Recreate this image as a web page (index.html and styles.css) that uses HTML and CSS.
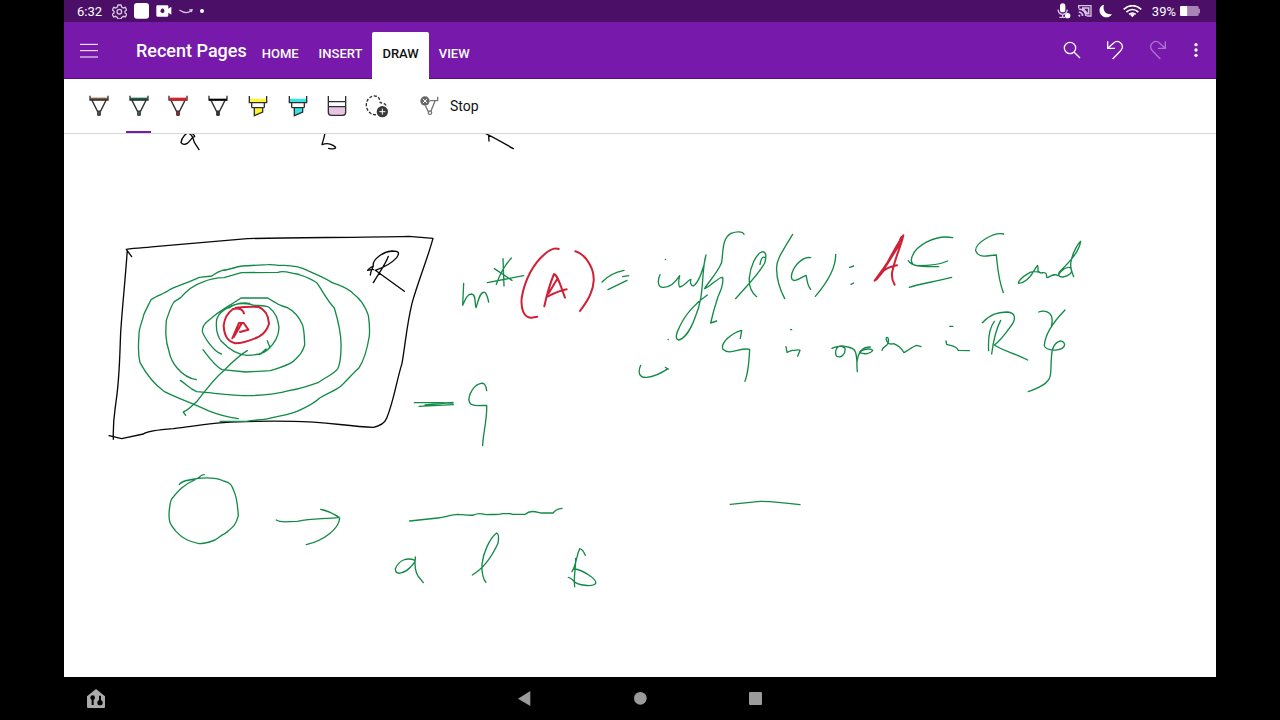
FILE: index.html
```html
<!DOCTYPE html>
<html lang="en">
<head>
<meta charset="utf-8">
<meta name="viewport" content="width=device-width, initial-scale=1">
<title>Recent Pages</title>
<link rel="stylesheet" href="styles.css">
</head>
<body>
<div class="device">
  <div class="status">
    <div class="status-left">
      <time class="clock">6:32</time>
      <svg width="15" height="15" viewBox="0 0 45 45" class="line soft"><path stroke-width="4" d="M18 3h9l2 6 5 3 6-2 4 8-5 4v5l5 4-4 8-6-2-5 3-2 5h-9l-2-5-5-3-6 2-4-8 5-4v-5l-5-4 4-8 6 2 5-3z"/><circle cx="22" cy="23" r="7" stroke-width="4"/></svg>
      <svg width="15" height="16" viewBox="0 0 45 48"><rect width="45" height="47" rx="9" fill="#fff"/></svg>
      <svg width="16" height="12" viewBox="0 0 48 36"><path fill="#fff" d="M4 1h30q3 0 3 3v7l9-6v24l-9-6v8q0 4-3 4H4q-3 0-3-4V4q0-3 3-3z"/><path fill="#4b0f68" d="M15 13l6-3 4 5v7l-6 3-6-5z"/></svg>
      <svg width="14" height="8" viewBox="0 0 42 24" class="line soft"><path stroke-width="4" d="M1 9q20 14 35 3M31 9l8-1-2 7"/></svg>
      <svg width="4" height="4" viewBox="0 0 12 12"><circle cx="6" cy="6" r="6" fill="#fff"/></svg>
    </div>
    <div class="status-right">
      <svg width="14" height="16" viewBox="0 0 42 48"><rect x="9" y="1" width="16" height="27" rx="8" fill="#fff"/><path class="line soft" stroke-width="4" d="M3 20q2 14 14 14t14-14M17 34v7M7 43h18"/><circle cx="32" cy="38" r="8" fill="#fff"/></svg>
      <svg width="14" height="12" viewBox="0 0 42 36" class="line soft"><path stroke-width="4" d="M2 10V2h37v31H26"/><path stroke-width="5" d="M2 12q20 1 22 21M2 21q11 1 12 12M2 30l4 4M12 9h20v17h-4L14 10"/></svg>
      <svg width="14" height="14" viewBox="0 0 42 42"><path fill="#fff" d="M15 2C3 4-2 18 4 29c8 14 28 15 35 1C24 34 9 22 15 2z"/></svg>
      <svg class="wifi" width="19" height="13" viewBox="0 0 57 39"><g class="line"><path stroke-width="5" d="M2 13Q28-9 55 13M10 21q18-15 36 0M18 28q10-8 20 0"/></g><path fill="#fff" d="M21 29q7-5 14 0l-7 8z"/></svg>
      <span class="percent">39%</span>
      <svg width="20" height="10" viewBox="0 0 60 30"><path fill="#a783b6" d="M22 0h30q4 0 4 4v4h4v14h-4v4q0 4-4 4H22z"/><path fill="#fff" d="M3 0h19v30H3q-3 0-3-3V3q0-3 3-3z"/></svg>
    </div>
  </div>

  <header class="appbar">
    <button class="menu" aria-label="Menu"><svg width="18" height="15" viewBox="0 0 54 45" class="line"><path stroke-width="3" d="M0 4h54M0 23h54M0 42h54"/></svg></button>
    <h1 class="title">Recent Pages</h1>
    <nav class="tabs">
      <button class="tab">HOME</button>
      <button class="tab">INSERT</button>
      <button class="tab active">DRAW</button>
      <button class="tab">VIEW</button>
    </nav>
    <div class="actions">
      <button aria-label="Search"><svg width="18" height="18" viewBox="0 0 54 54" class="line"><circle cx="21" cy="21" r="17" stroke-width="4"/><path stroke-width="4" d="M33 33l18 18"/></svg></button>
      <button aria-label="Undo"><svg width="18" height="20" viewBox="0 0 54 60" class="line"><path stroke-width="4" d="M5 4v21h22M6 24L23 9c12-11 28 0 26 14-1 5-4 8-8 12L20 57"/></svg></button>
      <button aria-label="Redo" class="dim"><svg width="18" height="20" viewBox="0 0 54 60" class="line"><path stroke-width="4" d="M49 4v21H27M48 24L31 9C19-2 3 9 5 23c1 5 4 8 8 12l21 22"/></svg></button>
      <button aria-label="More options" class="more"><svg width="4" height="14" viewBox="0 0 12 42" fill="#fff"><circle cx="6" cy="5" r="5"/><circle cx="6" cy="21" r="5"/><circle cx="6" cy="37" r="5"/></svg></button>
    </div>
  </header>

  <div class="toolbar">
    <div class="pens">
      <button aria-label="Brown pen"><svg class="tool" viewBox="0 0 72 72"><path class="cap" fill="#8b5a3c" d="M10 11h52v8H10z"/><path class="edge" d="M9 5v13h54V5M15 19l17 34M57 19L40 53"/><path class="nib" fill="#555" d="M32 51h8v13h-8z"/></svg></button>
      <button aria-label="Green pen" class="selected"><svg class="tool" viewBox="0 0 72 72"><path class="cap" fill="#14684b" d="M10 11h52v8H10z"/><path class="edge" d="M9 5v13h54V5M15 19l17 34M57 19L40 53"/><path class="nib" fill="#3c6a5a" d="M32 51h8v13h-8z"/></svg></button>
      <button aria-label="Red pen"><svg class="tool" viewBox="0 0 72 72"><path class="edge" d="M9 5v13h54V5M15 19l17 34M57 19L40 53"/><path fill="#d2232d" d="M10 11h52v9H10z"/><path class="nib" fill="#b8202c" d="M32 51h8v13h-8z"/></svg></button>
      <button aria-label="Black pen"><svg class="tool" viewBox="0 0 72 72"><path class="edge" d="M9 5v13h54V5M15 19l17 34M57 19L40 53"/><path fill="#050505" d="M9 14h54v6H9z"/><path class="nib" fill="#333" d="M32 51h8v13h-8z"/></svg></button>
      <button aria-label="Yellow highlighter"><svg class="tool" viewBox="0 0 72 72"><path fill="#fdf733" d="M11 14h50v11H11zM25 41h25v14L25 65z"/><path class="edge" d="M10 6v20h52V6M17 27v11q0 3 3 3h32q3 0 3-3V27M25 41h25v13L25 65z"/></svg></button>
      <button aria-label="Cyan highlighter"><svg class="tool" viewBox="0 0 72 72"><path fill="#35e4e8" d="M11 14h50v11H11zM25 41h25v14L25 65z"/><path class="edge" d="M10 6v20h52V6M17 27v11q0 3 3 3h32q3 0 3-3V27M25 41h25v13L25 65z"/></svg></button>
      <button aria-label="Eraser"><svg class="tool" viewBox="0 0 72 72"><path fill="#e8c3e2" d="M11 38h50v18q0 8-8 8H19q-8 0-8-8z"/><path class="edge" d="M10 6v49q0 9 9 9h34q9 0 9-9V6M10 23h52M10 38h52"/></svg></button>
      <button aria-label="Lasso select"><svg class="tool" viewBox="0 0 72 72"><path class="edge" stroke-dasharray="9 5" d="M33 62C18 64 5 50 4 35 3 17 17 4 30 6c9 1 14 7 14 15 0 7 7 6 13 8 5 2 7 6 8 10"/><circle cx="52" cy="53" r="17" fill="#383838"/><path stroke="#fff" stroke-width="3" d="M43 53h18M52 44v18"/></svg></button>
    </div>
    <button class="stop"><svg class="tool" viewBox="0 0 72 72"><path fill="none" stroke="#777" stroke-width="4" d="M62 8v12H38M54 21L42 51M25 35l10 20"/><circle cx="39" cy="56" r="5" fill="#fff" stroke="#777" stroke-width="4"/><circle cx="24" cy="21" r="14" fill="#686868"/><path stroke="#fff" stroke-width="3" d="M18 15l12 12M30 15L18 27"/></svg><span>Stop</span></button>
  </div>

  <main class="page">
    <svg class="ink" viewBox="64 134 1152 543" preserveAspectRatio="xMinYMin meet" role="img" aria-label="Handwritten notes: outer measure of a set A">
      <g class="black" transform="translate(74 78) scale(.33333)">
        <path d="M352 160c-16 4-29 18-31 34 6 8 18 6 25-4 8-9 9-14 16-14-2-9-13-14-20-12M347 168c8 2 11 15 14 25l14 22"/>
      </g>
      <g class="black" transform="translate(310 78) scale(.33333)">
        <path d="M45 160c0 13-5 24-9 40 12-5 22-5 33 2 8 5 11 8 3 10-6 2-11 0-16-1M519 163c33 15 61 32 91 49M536 173l1 16"/>
      </g>
      <g class="black" transform="translate(100 225) scale(.33333)">
        <path d="M95 95L79 73c30-5 62-5 93-9l270-23c140-4 320-3 485-7l72 6c-18 66-45 130-63 195-16 66-20 123-30 180-17 55-24 110-46 165-7 17-19 23-40 27-80-3-150-18-240-18-77-1-143-1-210 4-60 4-100 13-150 18-40 3-78 7-90 16l-65 14-38-9M82 73c-5 80-15 170-20 250-3 70-3 130-13 200-5 40-11 65-9 120"/>
        <path d="M865 94c-9 26-28 49-45 79M820 123c-4 10-8 15-9 27M820 123c-9 5-15 9-17 13 10-2 14-4 18-2M820 123c-4-20 30-43 56-45 24 0 22 8 14 20-18 20-40 30-64 38l87 63"/>
      </g>
      <g class="green" transform="translate(100 225) scale(.33333)">
        <path d="M360 589h80c25-6 48-2 77-11 26-6 58-10 87-25 25-11 38-18 55-34 29-17 45-21 64-36 15-14 34-36 53-53 19-27 27-66 32-97 2-24 0-42-3-62-9-28-26-51-45-65-19-19-35-22-65-34-20-14-54-27-87-42-24-9-35-6-54-9-24 2-36-4-51-2l-76 4c-25 4-40 12-60 13-18 5-22 11-31 17l-38 4c-30 14-62 24-87 36-18 14-40 18-58 31-7 15-16 31-22 46-4 23-16 38-14 61-2 23-4 53 3 82 17 31 40 63 72 86 39 20 85 36 132 58 25 10 60 20 91 24"/>
        <path d="M289 464c-47-8-76-53-82-85-12-36-10-62-8-93 10-29 15-46 24-56l19-12c21-25 40-38 64-46 30-13 47-14 66-14l52-15 110-1c17-7 36 2 57 5 22 7 40 11 61 28 17 25 28 50 51 74 16 53 22 86 20 121-1 27 0 37-9 60-15 20-34 24-58 42-30 10-52 19-86 24-37 10-78 15-122 16-58 0-104-8-158-12-22-10-32-23-49-34"/>
        <path d="M364 387c-25-8-52-52-57-68 0-11 4-21 14-29 19-17 38-31 58-43 18-11 30-18 44-28h80l22 13c15 12 23 10 37 16 20 10 37 31 46 53 6 23 5 39 6 59-7 24-15 31-34 49-20 14-48 21-69 28l-73 4-72-7c-22-11-41-39-57-60"/>
        <path d="M505 246c-20-8-41-1-52-8-30-5-51-2-68 10-16 7-29 17-35 35-3 27 2 51 14 66 20 21 47 41 78 42 22-1 45-2 61-17 20-18 33-36 34-66-4-26-8-44-31-62M387 249c20-14 45-17 62-14M502 347l8 21c-8 6-20 15-32 21 9-7 15-12 20-17M442 377c-22 12-45 34-71 60-30 25-54 58-79 91-15 13-26 27-42 33l7 10"/>
      </g>
      <g class="red" transform="translate(100 225) scale(.33333)">
        <path d="M432 265c-5-14-18-16-33-13-15 11-26 29-28 50 2 32 12 47 35 53 28 0 46-9 71-20 16-10 25-20 30-39-2-27-12-43-31-50-28-2-48 0-69 2M397 340l20-46h14l14 20-25 7M402 335l22-38"/>
      </g>

      <g class="green" transform="translate(450 225) scale(.33333)">
        <path d="M41 175l-3 66c8-17 13-34 27-34 14 2 8 25 13 41 7-17 10-49 26-46 7 3 9 17 12 29M133 131l53 35M184 99c-19 21-34 47-45 79M159 101l3 82M112 173l109-21M456 171c15-16 36-29 66-35M474 194l57-28M518 155l18-3M572 421c-11 26 0 38 18 36 27-2 45-13 64-26M646 427l8 6"/>
      </g>
      <g class="red" transform="translate(450 225) scale(.33333)">
        <path d="M326 72c-14-6-29 3-44 17-29 25-57 71-67 130-3 34 7 60 29 59l18-3M376 79c20 5 37 24 49 51 10 22 7 53-3 75-7 20-19 34-32 53M283 244c9-42 17-68 29-97 12 4 20 37 33 71M294 214c20-10 39-18 56-21M323 160l-27 45"/>
      </g>

      <g class="green" transform="translate(650 225) scale(.33333)">
        <path d="M30 149c-9 20-6 39 10 38 21 1 37-16 49-35-3 13-5 26 0 34 20-4 25-24 34-23-4 10 0 19 7 20 14-8 32-50 38-93-15 49-3 120-32 185-13 37-32 66-50 70-12-3-7-21 2-38 18-40 53-77 84-97M282 28c-4-10-24-9-39-3-30 16-22 65-29 90-15 34-41 58-50 76 16-5 43-37 54-34 4 21-7 42-14 58-10 30-17 56-22 79l18-6M257 221c29-34 69-72 87-107 6-20 5-33-7-34-21 7-36 48-39 78-2 24 7 45 22 57M330 118c2-14 8-26 15-20M428 28c-37 60-51 81-48 107 0 25 8 54 24 86M482 98c-27-5-56 31-58 57 2 24 26 4 44-4 4 10 1 26 14 42M557 88c1 45-30 90-61 126M599 127l12-4M603 178l8-4M46 103h1M54 343h1"/>
        <path d="M271 340l4-24c-31 8-65 39-56 57 20 20 52-7 80 0-2 32-2 62-14 96M408 365l3 17 15-6c10 2 18-5 24 0l-7 18M546 370c9-6 20-5 32-7-20-4-24 18-19 30 15 9 28-7 26-23l-10-7c21 2 32 5 38 12 11 16 6 37 9 65-2-20-4-42 10-62 8-10 17-12 29-12M422 314h3"/>
      </g>
      <g class="red" transform="translate(860 225) scale(.33333)">
        <path d="M104 179c-6-11-10-19-8-35 10-50 26-76 34-113-19 29-39 64-56 99l-30 37c30-40 46-64 67-99l13-32M49 164l22-27c12-9 30-14 40-16M69 137l49-78"/>
      </g>
      <g class="green" transform="translate(860 225) scale(.33333)">
        <path d="M278 38c-48-10-117 22-124 66 0 12 9 18 20 18 32 0 62-2 89-14M145 107c12 20 45 17 91 18M148 187c33-11 73-16 127-30M431 27c-31-7-86 28-84 50 10 27 43 12 62 13 4 37 5 70 21 113M542 144c-11-5-29-6-38 2-19 11-31 24-28 29 20 0 36-19 50-44 9-16 8-11 8 6 9 16 17-2 25 10 2 6-1 11 3 11 12-6 21-14 32-6 9-18 27-27 37-24 12 16-8 26-22 28-15 1-17-11-6-20 20-20 54-53 59-87-9 8-25 36-29 61-4 15 1 27 8 45"/>
        <path d="M0 380c12-10 38-10 38-3-7 9-25 12-38 6M66 376c3-12 17-14 17-20 7-14-3-26-5-14 4 13 9 17 23 14 15 7 21 11 31 27 12-7 29-20 38-22l13 4M269 304h10M258 348l2 10c15 5 27 2 35 18l33 1M403 289c-12 16-20 40-17 88M422 286c-16 31-23 69-27 101M367 293c25-26 47-31 72-32 27 0 31 19 14 42-20 28-32 45-50 57 23 16 63 26 100 45M536 261c20-8 38 3 40 19 2 16-2 18-2 26M615 255c-38 39-61 79-62 108 11 18 60 16 61-5-6-19-30-9-37 17-6 31-2 64-7 80-5 20-28 32-65 45"/>
      </g>

      <g class="green" transform="translate(150 380) scale(.33333)">
        <path d="M793 68h60l56 1M807 79l103-5M825 75l84-8M1010 32c-2-17-8-26-20-21-24 7-44 50-26 62 15 7 28 3 46 3 2 43-11 83-12 121M88 313c15-19 33-9 54-17 6-3 9-12 21-12M88 313c10-10 30-14 50-17 24-3 62-3 83 7 20 4 25 13 31 31 10 22 11 46 13 73-8 30-16 34-39 53-20 9-25 20-39 23-15 5-25 8-40 8-31-8-47-13-69-37-20-23-21-30-21-52 2-25 2-34 8-45 19-24 35-43 69-57M379 420c15 10 33 4 63 4 49-10 79-6 125-12-14-11-29-17-55-24 13 1 30 7 57 26-2 32-46 68-100 80M779 423l84-9c24-3 41-10 60-11 20 0 31 5 49 2 15-9 20-3 37-1 18-2 29 2 49-3h22"/>
        <path d="M795 541c-24-10-48-1-59 25 0 25 31 11 46-5 12-13 15-16 14-30-3 28 1 46 8 57l16 20M967 585c35-20 61-60 77-95 3-16 2-28-4-31-21 16-40 58-44 93-1 21 1 42 12 55"/>
      </g>
      <g class="green" transform="translate(480 480) scale(.33333)">
        <path d="M90 101l9 2h37c15-14 33-7 47-4h36c7-10 15-13 27-14M751 73l89-9c38 0 80 5 120 10M284 320c-4-30 4-57 3-85M316 226c-5-12-12-19-17-20-10 21-9 46-23 69 2-7 5-10 10-8 22 4 65 30 61 43-9 13-55 4-64-5-8-9-10-12-18-13"/>
      </g>
    </svg>
  </main>

  <nav class="navbar" aria-label="System navigation">
    <button class="shortcut" aria-label="Accessibility"><svg width="18" height="19" viewBox="0 0 54 57"><path fill="#aaa" d="M27 0L0 22v31q0 4 4 4h46q4 0 4-4V22z"/><g fill="#000"><circle cx="17" cy="26" r="7"/><path d="M14 28h6v20h-6zM36 20h6v20h-6z"/><circle cx="39" cy="41" r="8"/></g></svg></button>
    <button aria-label="Back"><svg width="14" height="15" viewBox="0 0 42 45"><path fill="#9b9b9b" d="M37 0v45L0 23z"/></svg></button>
    <button aria-label="Home"><svg width="13" height="13" viewBox="0 0 39 39"><circle cx="19" cy="19" r="19" fill="#9b9b9b"/></svg></button>
    <button aria-label="Overview"><svg width="13" height="13" viewBox="0 0 39 39"><rect width="39" height="39" rx="3" fill="#9b9b9b"/></svg></button>
  </nav>
</div>
</body>
</html>
```

FILE: styles.css
```css
* {
  box-sizing: border-box;
}

body {
  margin: 0;
  background: #000;
  font-family: Roboto, "Liberation Sans", sans-serif;
}

button {
  display: flex;
  align-items: center;
  justify-content: center;
  margin: 0;
  padding: 0;
  border: 0;
  background: none;
  font: inherit;
  color: inherit;
}

svg {
  display: block;
  flex: none;
}

.line {
  fill: none;
  stroke: #fff;
}

.soft {
  stroke: #d9c3e3;
}

.device {
  display: flex;
  flex-direction: column;
  width: 90%;
  min-height: 100vh;
  margin: 0 auto;
}

.status {
  display: flex;
  align-items: center;
  justify-content: space-between;
  height: 22px;
  padding: 0 16px 0 13px;
  background: #4b0f68;
  color: #fff;
  font-size: 13px;
}

.status-left,
.status-right {
  display: flex;
  align-items: center;
  gap: 8px;
}

.status-left {
  gap: 7px;
}

.clock {
  width: 28px;
}

.status-right {
  gap: 7px;
}

.status-right .wifi {
  margin: 0 3px;
}

.percent {
  margin-right: -3px;
}

.appbar {
  display: flex;
  height: 57px;
  padding: 0 3px 0 8px;
  background: #7719aa;
  border-bottom: 1px solid #5a0c86;
  color: #fff;
}

.menu {
  width: 34px;
}

.title {
  margin: 17px 5px 0 30px;
  font-size: 18px;
  font-weight: 500;
  line-height: 24px;
  white-space: nowrap;
}

.tabs {
  display: flex;
  align-items: flex-end;
  margin-bottom: -1px;
}

.tab {
  height: 47px;
  padding: 0 10px 5px;
  border-radius: 2px 2px 0 0;
  font-size: 13px;
  font-weight: 500;
}

.tab.active {
  background: #fff;
  color: #111;
}

.actions {
  display: flex;
  margin-left: auto;
}

.actions button {
  width: 43px;
}

.actions .more {
  width: 34px;
}

.dim {
  opacity: .4;
}

.toolbar {
  display: flex;
  height: 55px;
  padding-left: 15px;
  background: #fff;
  border-bottom: 1px solid #d8d8d8;
  color: #111;
}

.pens {
  display: grid;
  grid-template-columns: repeat(8, 1fr);
  width: 318px;
}

.pens .selected {
  background: linear-gradient(#7719aa, #7719aa) center bottom / 25px 2px no-repeat;
}

.tool {
  width: 24px;
  height: 24px;
}

.edge {
  fill: none;
  stroke: #303030;
  stroke-width: 4;
}

.nib {
  stroke: #303030;
  stroke-width: 3;
}

.stop {
  gap: 9px;
  margin-left: 20px;
  font-size: 14px;
}

.page {
  flex: 1;
  background: #fff;
}

.ink {
  width: 100%;
  height: auto;
}

.ink path {
  fill: none;
  stroke-width: 4;
  stroke-linecap: round;
  stroke-linejoin: round;
}

.ink .black path {
  stroke: #080808;
}

.ink .green path {
  stroke: #138a48;
}

.ink .red path {
  stroke: #cf2036;
  stroke-width: 6;
}

.navbar {
  display: grid;
  grid-template-columns: 1fr 115px 115px 115px 1fr;
  height: 43px;
  background: #000;
}

.navbar .shortcut {
  justify-content: flex-start;
  padding-left: 23px;
}
```
